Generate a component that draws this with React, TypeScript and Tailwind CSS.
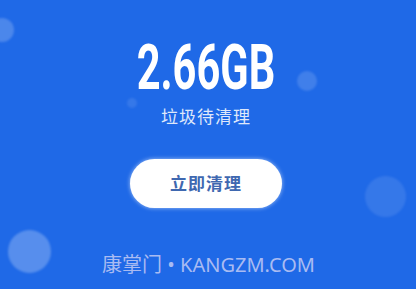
import React from 'react';

const bubbles = [
  { cls: 'left-[-10px] top-[18px] h-[24px] w-[24px] bg-white/20' },
  { cls: 'left-[8px] top-[230px] h-[43px] w-[43px] bg-white/25' },
  { cls: 'left-[365px] top-[176px] h-[41px] w-[41px] bg-white/10' },
  { cls: 'left-[297px] top-[71px] h-[20px] w-[20px] bg-white/15' },
  { cls: 'left-[127px] top-[98px] h-[10px] w-[10px] bg-white/10' },
];

export default function App() {
  return (
    <div
      className="relative h-[289px] w-[416px] overflow-hidden bg-[#1f69e7]"
      style={{ fontFamily: '"Noto Sans", "Noto Sans CJK SC", sans-serif' }}
    >
      {bubbles.map((b, i) => (
        <div key={i} className={`absolute rounded-full blur-[1px] ${b.cls}`} />
      ))}

      <div className="relative flex flex-col items-center pr-[4px] pt-[33px]">
        <div
          className="scale-x-[0.66] text-[63px] font-bold leading-[70px] text-white"
          style={{ fontFamily: 'Roboto, "Noto Sans", sans-serif' }}
        >
          2.66GB
        </div>
        <div className="mt-[2px] text-[17px] leading-[24px] tracking-[1px] text-[#dfe8fb]">
          垃圾待清理
        </div>
        <button className="mt-[30px] flex h-[49px] w-[152px] items-center justify-center rounded-full bg-white text-[17px] font-semibold tracking-[1px] text-[#3f68b0] shadow-[0_0_4px_rgba(255,255,255,0.6)]">
          立即清理
        </button>
        <div className="ml-[5px] mt-[45px] text-[20px] leading-[24px] text-[#a9bbf2]">
          康掌门 • KANGZM.COM
        </div>
      </div>
    </div>
  );
}
